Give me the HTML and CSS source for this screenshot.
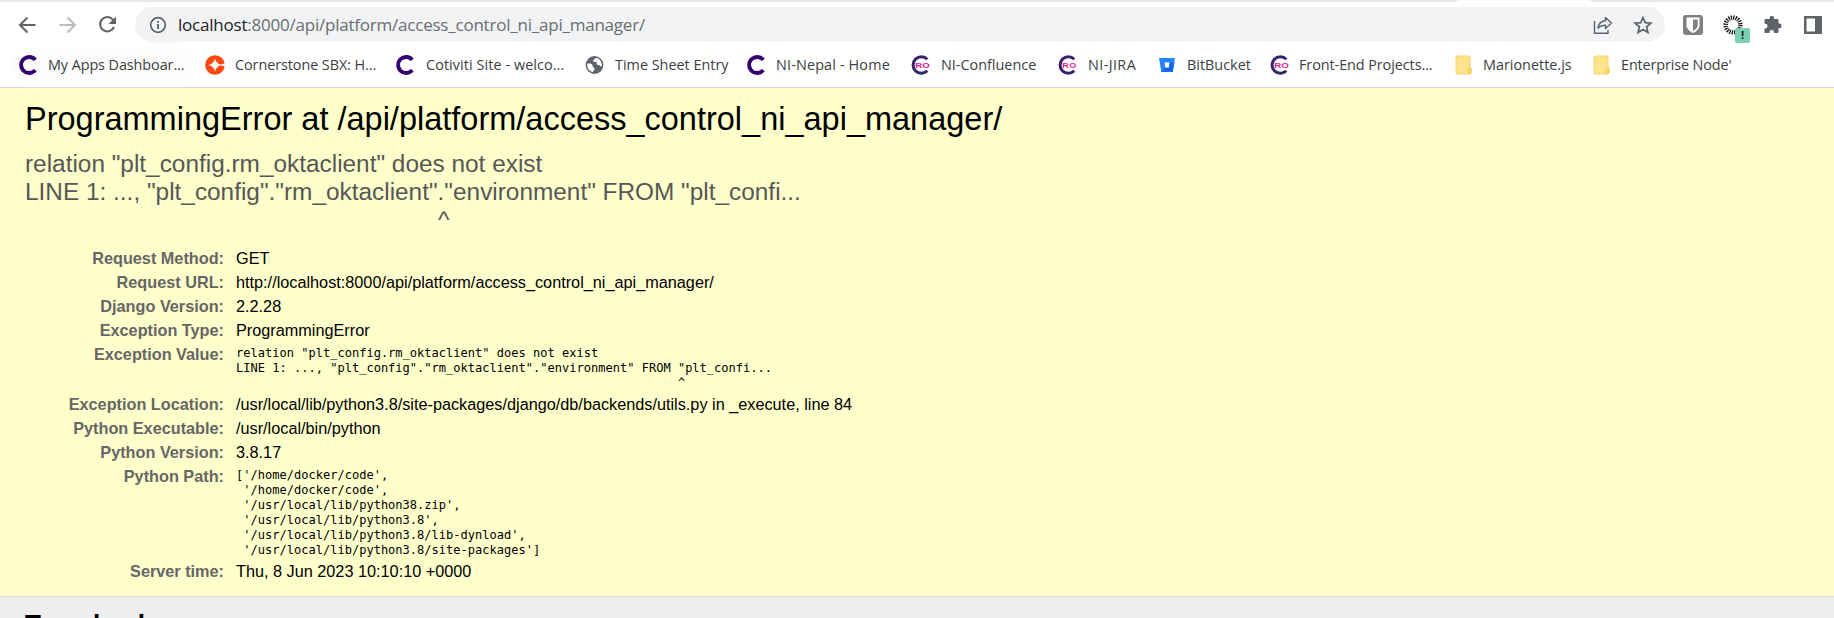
FILE: index.html
```html
<!DOCTYPE html>
<html lang="en">
<head>
<meta charset="utf-8">
<title>ProgrammingError at /api/platform/access_control_ni_api_manager/</title>
<link rel="stylesheet" href="styles.css">
</head>
<body>
<svg width="0" height="0" class="defs" aria-hidden="true">
  <symbol id="cotiviti" viewBox="0 0 20 20"><path d="M16.300 4.900A8 8 0 1 0 16.300 15.100" fill="none" stroke="#330072" stroke-width="3.800"/></symbol>
  <symbol id="cro" viewBox="0 0 20 20"><path d="M16.300 4.200A8.300 8.300 0 1 0 16.300 15.800" fill="none" stroke="#35236e" stroke-width="3"/><text x="4.200" y="12.900" textLength="14.500" lengthAdjust="spacingAndGlyphs" class="ro">RO</text></symbol>
  <symbol id="folder" viewBox="0 0 18 20"><path d="M2 1h12a1 1 0 0 1 1 1v11h1v4.500l-1.500 1.500H2a1 1 0 0 1-1-1V2a1 1 0 0 1 1-1z" fill="#ffe48f" stroke="#f6d561"/><path d="M13 18v-3q0-1.500 1.500-1.500T16 15v2q0 1.500-1.500 1.500z" fill="#ffdc69" stroke="#eec947"/></symbol>
</svg>
<div class="browser">
  <div class="tabstrip"><span></span><i></i><span></span></div>
  <div class="toolbar">
    <svg class="nav" viewBox="0 0 20 20"><path d="M18.500 10H3.500M10.500 2.500L3 10l7.500 7.500" fill="none" stroke="#5f6368" stroke-width="2"/></svg>
    <svg class="nav" viewBox="0 0 20 20"><path d="M2.500 10h15M10.500 2.500L18 10l-7.500 7.500" fill="none" stroke="#babcbe" stroke-width="2"/></svg>
    <svg class="nav" viewBox="0 0 20 20"><path d="M16.200 5A7.200 7.200 0 1 0 17 12" fill="none" stroke="#5f6368" stroke-width="2.100"/><path d="M19 1.500V9h-7.500z" fill="#5f6368"/></svg>
    <div class="omnibox">
      <svg class="info" viewBox="0 0 18 18"><circle cx="9" cy="9" r="7.300" fill="none" stroke="#5f6368" stroke-width="1.700"/><path d="M9 8v5M9 5v1.800" stroke="#5f6368" stroke-width="1.900"/></svg>
      <span class="url"><b>localhost</b>:8000/api/platform/access_control_ni_api_manager/</span>
      <svg class="share" viewBox="0 0 20 20"><path d="M1.500 6v12.300H15V15" fill="none" stroke="#5f6368" stroke-width="1.400"/><path d="M12.500 2.500L18.500 8l-6 5.500v-3.300c-3.500 0-5.500.8-7.500 3 .5-4.500 3-7 7.500-7.400z" fill="none" stroke="#5f6368" stroke-width="1.400" stroke-linejoin="round"/></svg>
      <svg class="star" viewBox="0 0 20 20"><path d="M10 2.500l2.200 5.200 5.700.5-4.300 3.700 1.300 5.600-4.900-3-4.900 3 1.300-5.600-4.300-3.700 5.700-.5z" fill="none" stroke="#5f6368" stroke-width="1.700"/></svg>
    </div>
    <svg class="shield" viewBox="0 0 20 20"><rect width="20" height="20" rx="3" fill="#808080"/><path d="M3.500 2.500h13V10c0 4.200-3.500 6.500-6.500 8-3-1.500-6.500-3.800-6.500-8z" fill="#fff"/><path d="M10 4.500h4.700V10c0 3-2.700 4.800-4.700 6z" fill="#808080"/></svg>
    <div class="burst"><svg viewBox="0 0 20 20"><circle cx="10" cy="10" r="7.400" fill="none" stroke="#111" stroke-width="4.400" stroke-dasharray="1.250 1.074"/></svg><span>!</span></div>
    <svg class="puzzle" viewBox="0 0 20 20"><path d="M2.500 4h4V3.200a2.300 2.300 0 0 1 4.600 0V4h3.400a1 1 0 0 1 1 1v3.600h.8a2.300 2.300 0 0 1 0 4.600h-.8V17a1 1 0 0 1-1 1H11v-.8a2.300 2.300 0 0 0-4.600 0v.8H2.500a1 1 0 0 1-1-1v-3.600h.8a2.300 2.300 0 0 0 0-4.600h-.8V5a1 1 0 0 1 1-1z" fill="#5f6368"/></svg>
    <svg class="panel" viewBox="0 0 18 18"><path d="M0 0h18v18H0zM2.500 2.500v13h8.500v-13z" fill="#5f6368" fill-rule="evenodd"/></svg>
  </div>
  <div class="bookmarks">
    <div class="bm b1"><svg><use href="#cotiviti"/></svg><span>My Apps Dashboar...</span></div>
    <div class="bm b2"><svg viewBox="0 0 20 20"><circle cx="10" cy="10" r="9.800" fill="#ff4713"/><path d="M10 3.500q1.200 5.300 6.500 6.500-5.300 1.200-6.500 6.500-1.200-5.300-6.500-6.500 5.300-1.200 6.500-6.500z" fill="#fff"/><path d="M14 10l6-1.500v3z" fill="#fff"/></svg><span>Cornerstone SBX: H...</span></div>
    <div class="bm b3"><svg><use href="#cotiviti"/></svg><span>Cotiviti Site - welco...</span></div>
    <div class="bm b4"><svg viewBox="0 0 20 20"><circle cx="9.500" cy="10" r="8.900" fill="#5f6368"/><path d="M2.300 8.500c3 0 5.200 0 5.200 2s2 1.300 2 3.500-1.500 1.300-1.500 3C4.500 16.500 1.500 13 2.300 8.500zM11.500 2.800c-2 .2-1.500 2-3.500 2.400 0 2 1.500 1.500 3.500 1.500 0 2 0 3.300 2 3.300s1.500 2 3.300 1.500C17.500 8 15 3.500 11.500 2.800z" fill="#fff"/></svg><span>Time Sheet Entry</span></div>
    <div class="bm b5"><svg><use href="#cotiviti"/></svg><span>NI-Nepal - Home</span></div>
    <div class="bm b6"><svg><use href="#cro"/></svg><span>NI-Confluence</span></div>
    <div class="bm b7"><svg><use href="#cro"/></svg><span>NI-JIRA</span></div>
    <div class="bm b8"><svg viewBox="0 0 20 20"><path d="M1 3h16l-2.300 14H3.300z" fill="#2684ff"/><path d="M12 7.500h4.400L14.700 17H3.500L7 13h4z" fill="#1268e8"/><path d="M6.500 7.500h5l-.8 5H7.300z" fill="#fff"/></svg><span>BitBucket</span></div>
    <div class="bm b9"><svg><use href="#cro"/></svg><span>Front-End Projects...</span></div>
    <div class="bm b10"><svg><use href="#folder"/></svg><span>Marionette.js</span></div>
    <div class="bm b11"><svg><use href="#folder"/></svg><span>Enterprise Node'</span></div>
  </div>
</div>
<main class="summary">
  <h1>ProgrammingError at /api/platform/access_control_ni_api_manager/</h1>
  <pre class="exception">relation "plt_config.rm_oktaclient" does not exist
LINE 1: ..., "plt_config"."rm_oktaclient"."environment" FROM "plt_confi...
                                                             ^</pre>
  <table class="meta">
    <tr><th>Request Method:</th><td>GET</td></tr>
    <tr><th>Request URL:</th><td>http://localhost:8000/api/platform/access_control_ni_api_manager/</td></tr>
    <tr><th>Django Version:</th><td>2.2.28</td></tr>
    <tr><th>Exception Type:</th><td>ProgrammingError</td></tr>
    <tr><th>Exception Value:</th><td><pre>relation "plt_config.rm_oktaclient" does not exist
LINE 1: ..., "plt_config"."rm_oktaclient"."environment" FROM "plt_confi...
                                                             ^</pre></td></tr>
    <tr><th>Exception Location:</th><td>/usr/local/lib/python3.8/site-packages/django/db/backends/utils.py in _execute, line 84</td></tr>
    <tr><th>Python Executable:</th><td>/usr/local/bin/python</td></tr>
    <tr><th>Python Version:</th><td>3.8.17</td></tr>
    <tr><th>Python Path:</th><td><pre>['/home/docker/code',
 '/home/docker/code',
 '/usr/local/lib/python38.zip',
 '/usr/local/lib/python3.8',
 '/usr/local/lib/python3.8/lib-dynload',
 '/usr/local/lib/python3.8/site-packages']</pre></td></tr>
    <tr><th>Server time:</th><td>Thu, 8 Jun 2023 10:10:10 +0000</td></tr>
  </table>
</main>
<section class="traceback"><h2>Traceback</h2></section>
</body>
</html>
```
FILE: styles.css
```css
* { box-sizing: border-box; }
html, body { height: 100%; }
body { margin: 0; height: 618px; overflow: hidden; display: flex; flex-direction: column; background: #eee; font-family: "Liberation Sans", Arial, sans-serif; color: #000; }
svg { display: block; flex: none; }
.defs { position: absolute; }
.browser { flex: none; height: 88px; background: #fff; border-bottom: 1px solid #d5d7da; font-family: "Open Sans", "Noto Sans", sans-serif; }
.tabstrip { display: flex; height: 2px; background: #fff; }
.tabstrip span:first-child { width: 1458px; background: #e7e8ec; border-bottom-right-radius: 8px 2px; }
.tabstrip i { width: 132px; }
.tabstrip span:last-child { flex: 1; background: #e7e8ec; border-bottom-left-radius: 8px 2px; }
.toolbar { display: flex; align-items: center; height: 45px; padding: 0 12px 0 17px; }
.nav { width: 20px; height: 20px; margin-right: 20px; }
.nav:nth-child(3) { margin-right: 18px; }
.omnibox { display: flex; align-items: center; width: 1530px; height: 35px; background: #f1f3f4; border-radius: 18px; padding: 0 12px 0 14px; }
.info { width: 18px; height: 18px; }
.url { flex: 1; margin-left: 11px; font-size: 17px; color: #6a6d71; white-space: nowrap; letter-spacing: -0.22px; }
.url b { font-weight: 400; color: #202124; }
.share { width: 20px; height: 20px; margin-right: 20px; }
.star { width: 20px; height: 20px; }
.shield { width: 20px; height: 20px; margin-left: 18px; }
.burst { position: relative; width: 20px; height: 20px; margin-left: 20px; }
.burst svg { width: 20px; height: 20px; }
.burst span { position: absolute; left: 12px; top: 13px; width: 15px; height: 15px; border-radius: 2px; background: #7ccfb5; font: bold 11px/15px "Liberation Sans", sans-serif; text-align: center; }
.puzzle { width: 20px; height: 20px; margin-left: 20px; }
.panel { width: 18px; height: 18px; margin-left: 21px; }
.bookmarks { display: flex; align-items: center; height: 35px; padding-left: 10px; }
.bm { display: flex; align-items: center; flex: none; height: 35px; padding-left: 9px; font-size: 14.4px; color: #3c4043; white-space: nowrap; }
.bm svg { width: 20px; height: 20px; }
.bm span { margin-left: 9px; }
.b1 { width: 186px; background: linear-gradient(#fcfcfc, #fcfcfc) 0 0 / 182px 35px no-repeat; border-radius: 17px; letter-spacing: -0.08px; }
.b2 { width: 191px; } .b3 { width: 189px; letter-spacing: 0.08px; } .b4 { width: 162px; } .b5 { width: 164px; letter-spacing: 0.15px; }
.b6 { width: 147px; } .b7 { width: 100px; letter-spacing: 0.4px; } .b8 { width: 112px; } .b9 { width: 184px; }
.b10 { width: 138px; } .b11 { width: 160px; letter-spacing: -0.12px; }
.b2 span, .b3 span, .b4 span, .b6 span, .b7 span { margin-left: 10px; }
.b2, .b9 { letter-spacing: -0.07px; }
.ro { font: bold 7.5px "Liberation Sans", sans-serif; fill: #e5198f; }
.summary { flex: none; height: 509px; background: #ffc; border-bottom: 1px solid #ddd; padding: 12px 25px 0; }
h1 { margin: 0; font-weight: 400; font-size: 32.5px; line-height: 38px; }
pre { margin: 0; }
.exception { margin-top: 12px; font-family: "Liberation Sans", Arial, sans-serif; font-size: 24.38px; line-height: 28px; color: #575757; }
.meta { margin-top: 13px; border-collapse: collapse; font-size: 16.25px; line-height: 19px; }
.meta th { width: 199px; padding: 2px 0 3px; text-align: right; vertical-align: top; color: #666; }
.meta td { padding: 2px 0 3px 12px; vertical-align: top; }
.meta pre { padding-top: 1px; margin-bottom: -1px; font-family: "DejaVu Sans Mono", monospace; font-size: 12.03px; letter-spacing: 0.01px; line-height: 15px; }
.traceback { flex: 1; min-height: 0; overflow: hidden; padding: 12px 25px 0; }
h2 { margin: 0; font-size: 26px; line-height: 30px; }
```
